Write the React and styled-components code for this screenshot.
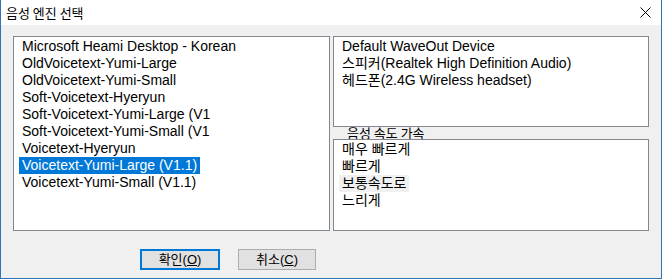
import styled, { createGlobalStyle } from 'styled-components';

const GlobalStyle = createGlobalStyle`
  html, body {
    margin: 0;
    padding: 0;
    background: #f0f0f0;
  }
  * {
    box-sizing: border-box;
  }
`;

const Window = styled.div`
  width: 662px;
  height: 279px;
  display: flex;
  flex-direction: column;
  background: #f0f0f0;
  border: 1px solid #2f74b5;
  border-top: none;
  font-family: "Liberation Sans", "Noto Sans CJK KR", sans-serif;
  font-size: 13px;
  color: #000;
`;

const TitleBar = styled.div`
  height: 25px;
  flex: none;
  background: #ffffff;
  display: flex;
  align-items: center;
  justify-content: space-between;
  padding: 0 10px 0 5px;
`;

const Title = styled.span`
  font-family: "Noto Sans CJK KR", sans-serif;
  font-size: 13px;
  line-height: 25px;
`;

const CloseIcon = () => (
  <svg width="11" height="11" viewBox="0 0 11 11">
    <path d="M0.5 0.5 L10.5 10.5 M10.5 0.5 L0.5 10.5" stroke="#000" strokeWidth="1" fill="none" />
  </svg>
);

const Body = styled.div`
  display: grid;
  grid-template-columns: 317px 316px;
  column-gap: 3px;
  padding: 11px 0 0 12px;
`;

const RightColumn = styled.div`
  display: flex;
  flex-direction: column;
`;

const ListBox = styled.div`
  background: #ffffff;
  border: 1px solid #828790;
  height: ${(p) => p.$height}px;
  padding: 1px 0 0 5px;
  overflow: hidden;
  font-size: 14px;
`;

const Item = styled.div`
  width: fit-content;
  height: 17px;
  line-height: 17px;
  padding: 0 3px;
  white-space: nowrap;
  background: ${(p) => (p.$selected ? '#0078d7' : p.$hover ? '#f0f0f0' : 'transparent')};
  color: ${(p) => (p.$selected ? '#ffffff' : '#000000')};
`;

const GroupLabel = styled.div`
  height: 12px;
  line-height: 12px;
  padding-left: 14px;
  font-family: "Noto Sans CJK KR", sans-serif;
  font-size: 13px;
  overflow: visible;
`;

const ButtonRow = styled.div`
  display: flex;
  gap: 18px;
  padding: 18px 0 0 139px;
`;

const Button = styled.button`
  width: ${(p) => p.$width}px;
  height: 21px;
  padding: 0;
  background: #e1e1e1;
  border: ${(p) => (p.$default ? '2px solid #0078d7' : '1px solid #adadad')};
  font-family: "Liberation Sans", "Noto Sans CJK KR", sans-serif;
  font-size: 13px;
  color: #000;
  line-height: 17px;
  u {
    text-decoration: underline;
  }
`;

const engines = [
  'Microsoft Heami Desktop - Korean',
  'OldVoicetext-Yumi-Large',
  'OldVoicetext-Yumi-Small',
  'Soft-Voicetext-Hyeryun',
  'Soft-Voicetext-Yumi-Large (V1',
  'Soft-Voicetext-Yumi-Small (V1',
  'Voicetext-Hyeryun',
  'Voicetext-Yumi-Large (V1.1)',
  'Voicetext-Yumi-Small (V1.1)',
];

const devices = [
  'Default WaveOut Device',
  '스피커(Realtek High Definition Audio)',
  '헤드폰(2.4G Wireless headset)',
];

const speeds = ['매우 빠르게', '빠르게', '보통속도로', '느리게'];

const App = () => {
  return (
    <>
      <GlobalStyle />
      <Window>
        <TitleBar>
          <Title>음성 엔진 선택</Title>
          <CloseIcon />
        </TitleBar>
        <Body>
          <ListBox $height={195}>
            {engines.map((name, i) => (
              <Item key={name} $selected={i === 7}>{name}</Item>
            ))}
          </ListBox>
          <RightColumn>
            <ListBox $height={91}>
              {devices.map((name) => (
                <Item key={name}>{name}</Item>
              ))}
            </ListBox>
            <GroupLabel>음성 속도 가속</GroupLabel>
            <ListBox $height={92}>
              {speeds.map((name, i) => (
                <Item key={name} $hover={i === 2}>{name}</Item>
              ))}
            </ListBox>
          </RightColumn>
        </Body>
        <ButtonRow>
          <Button $default $width={80}>확인(<u>O</u>)</Button>
          <Button $width={78}>취소(<u>C</u>)</Button>
        </ButtonRow>
      </Window>
    </>
  );
};

export default App;
